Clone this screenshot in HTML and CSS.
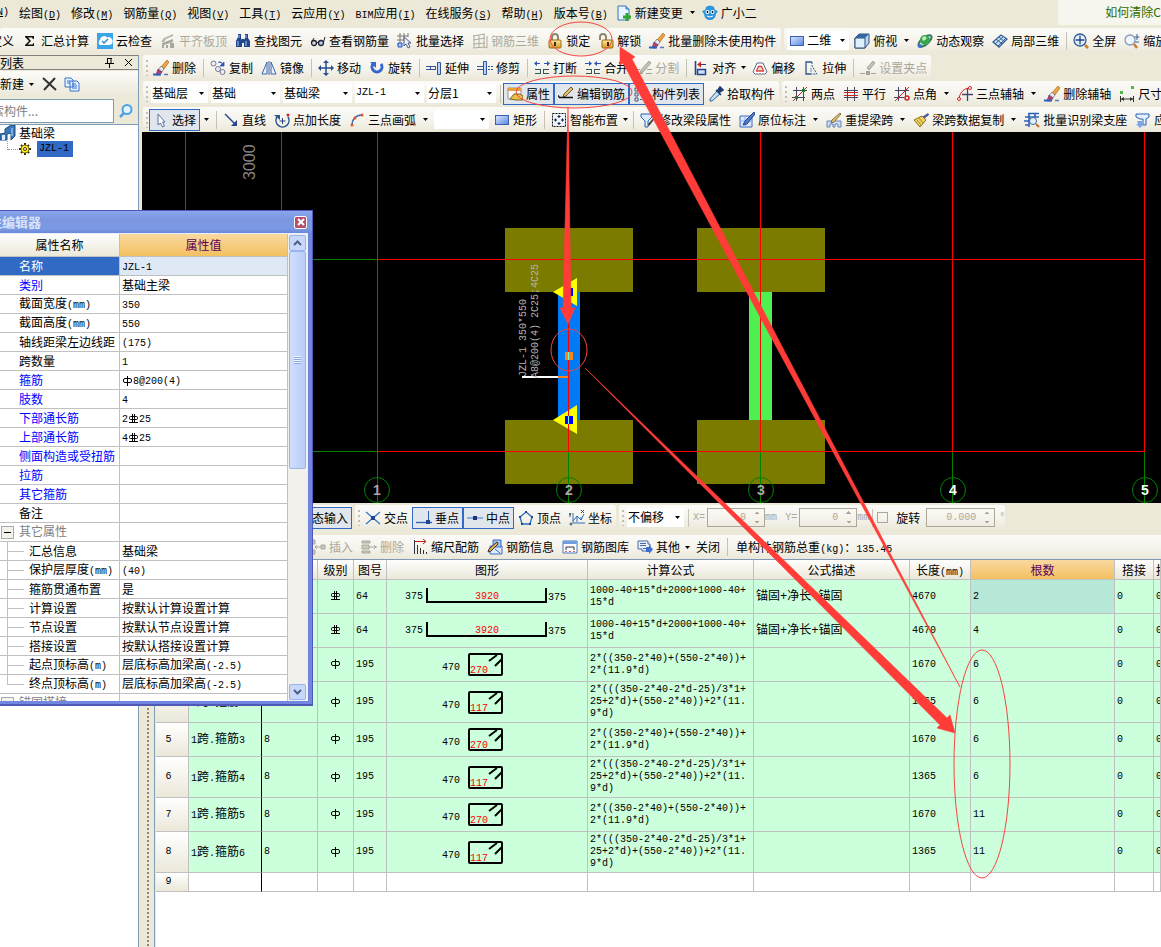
FILE: index.html
```html
<!DOCTYPE html>
<html lang="zh-CN">
<head>
<meta charset="utf-8">
<title>钢筋算量</title>
<link rel="stylesheet" href="styles.css">
</head>
<body>
<svg class="defs" aria-hidden="true">
<defs>
<linearGradient id="gb" x1="0" y1="0" x2="1" y2="1"><stop offset="0" stop-color="#dce9ff"/><stop offset="1" stop-color="#5a86e0"/></linearGradient>
<linearGradient id="gy" x1="0" y1="0" x2="0" y2="1"><stop offset="0" stop-color="#ffe9a0"/><stop offset="1" stop-color="#d99a2a"/></linearGradient>
</defs>
<symbol id="caret" viewBox="0 0 5 3"><path d="M0 0h5L2.500 3z" fill="#000"/></symbol>
<symbol id="sigma" viewBox="0 0 16 16"><path d="M3 3h9v3h-1L10 4.500H6L9 8l-3.500 3.500H10.500L11.500 10H12v3H3v-1l4-4-4-4z" fill="#111"/></symbol>
<symbol id="cloud" viewBox="0 0 16 16"><rect width="16" height="16" fill="#3aa5e8"/><path d="M3 12a3 3 0 0 1 0-5 4 4 0 0 1 7-2.500A3.500 3.500 0 0 1 13 12z" fill="#fff"/><path d="M5 8l2 2 4-4" fill="none" stroke="#2b8ac9" stroke-width="1.500"/></symbol>
<symbol id="slab" viewBox="0 0 16 16"><path d="M1 9l3-4 9-4v2L6 6l-2 3z" fill="#b9b6aa"/><path d="M2 10l11-4v3L4 12v3H2zM6 12h2v3H6zM10 10h4v5h-4z" fill="#aaa79b"/></symbol>
<symbol id="binoc" viewBox="0 0 16 16"><path d="M3 1h3v4l1 2v7H1V8l2-4zM10 1h3v4l2 3v6H9V7l1-2zM7 6h2v4H7z" fill="#22458c"/><path d="M3 8v5M11 8v5M4 2v3M11 2v3" stroke="#a9c4f5"/></symbol>
<symbol id="glasses" viewBox="0 0 16 16"><circle cx="4" cy="10" r="2.500" fill="#cfd9e8" stroke="#222" stroke-width="1.300"/><circle cx="11" cy="10" r="2.500" fill="#b8c9e4" stroke="#223" stroke-width="1.300"/><path d="M6.500 9.500h2M1.500 9L4 5M13.500 9L15 4" stroke="#223" fill="none"/></symbol>
<symbol id="batch" viewBox="0 0 16 16"><path d="M0 3h11M0 7h7M0 11h5M3 0v14M7 0v8M11 0v4" stroke="#777" fill="none"/><path d="M1 10h4v4H1z" fill="#9ec0ff" stroke="#2b59c0"/><path d="M7 4v9l2-2 2 4 2-1-2-4h3z" fill="#e9eefc" stroke="#4d5e86"/></symbol>
<symbol id="mesh" viewBox="0 0 16 16"><path d="M1 3l12-2M1 7l12-2M1 11l12-1M1 15l12-1M2 2v13M7 2v13M12 1v13M15 3v12M12 14l3 1" stroke="#aeab9f" fill="none"/></symbol>
<symbol id="lock" viewBox="0 0 16 16"><path d="M5 7V4a3 3 0 0 1 6 0v3" fill="none" stroke="#8d8670" stroke-width="2"/><rect x="2" y="7" width="12" height="8" rx="1" fill="url(#gy)" stroke="#9b6c14"/><path d="M8 9v4" stroke="#412c05" stroke-width="2"/></symbol>
<symbol id="unlock" viewBox="0 0 16 16"><path d="M2 7V4a3 3 0 0 1 6 0v3" fill="none" stroke="#8d8670" stroke-width="2"/><rect x="4" y="7" width="11" height="8" rx="1" fill="url(#gy)" stroke="#9b6c14"/><path d="M10 9v4" stroke="#412c05" stroke-width="2"/></symbol>
<symbol id="brush" viewBox="0 0 16 16"><path d="M14 0l2 2-5 7-3-2z" fill="#f0a23c" stroke="#9a5b1c" stroke-width=".6"/><path d="M8 6l3 3-2 3-4-2z" fill="#e5e8f0" stroke="#556" stroke-width=".6"/><path d="M5 9l4 3-2 3H3z" fill="#c23a6a" stroke="#43306a" stroke-width=".6"/><path d="M0 14.500h8" stroke="#2f5fc4" stroke-width="2"/><path d="M11 14.500h4" stroke="#5a78b8" stroke-width="1.500"/></symbol>
<symbol id="copy" viewBox="0 0 16 16"><circle cx="3.500" cy="3.500" r="2.500" fill="#eef" stroke="#778"/><circle cx="8" cy="9" r="2.500" fill="#eef" stroke="#778"/><circle cx="12.500" cy="12" r="2.500" fill="#eef" stroke="#778"/><path d="M8 2h3l2 2M14 2v4h-4z" stroke="#2a55bb" fill="#2a55bb" stroke-width=".8"/></symbol>
<symbol id="mirror" viewBox="0 0 16 16"><path d="M6 2v12H1zM10 2v12h5z" fill="#e8efff" stroke="#3a62a8"/><path d="M8 1v14" stroke="#3a62a8"/></symbol>
<symbol id="move" viewBox="0 0 16 16"><path d="M8 2v12M2 8h12" stroke="#2a4e8c" stroke-width="1.500"/><path d="M8 0l3 3H5zM8 16l3-3H5zM0 8l3-3v6zM16 8l-3-3v6z" fill="#2a4e8c"/></symbol>
<symbol id="rotate" viewBox="0 0 16 16"><path d="M4 4a5 5 0 1 0 8 0" fill="none" stroke="#3567cf" stroke-width="3"/><path d="M1 2h6v6z" fill="#3567cf"/></symbol>
<symbol id="extend" viewBox="0 0 16 16"><path d="M0 6.500h10M0 9.500h10M4.500 6.500v3M9.500 6.500v3" stroke="#31558f"/><path d="M11.500 2.500h3v12h-3z" fill="#b9d2ff" stroke="#31558f"/></symbol>
<symbol id="trim" viewBox="0 0 16 16"><path d="M0 6.500h6M0 9.500h6M11 6.500h2M11 9.500h2M14 6.500h2M14 9.500h2" stroke="#31558f"/><path d="M6.500 1.500h3v13h-3z" fill="#b9d2ff" stroke="#31558f"/></symbol>
<symbol id="brk" viewBox="0 0 16 16"><path d="M2 3.500h4M10 3.500h4" stroke="#2a55bb"/><path d="M0 3.500l3-2.500v5zM16 3.500l-3-2.500v5z" fill="#2a55bb"/><path d="M1 9.500h6M1 13.500h6M9 9.500h6M9 13.500h6M6.500 9v5M9.500 9v5" stroke="#355"/></symbol>
<symbol id="join" viewBox="0 0 16 16"><path d="M0 3.500h4M12 3.500h4" stroke="#2a55bb"/><path d="M7 3.500L4 1v5zM9 3.500L12 1v5z" fill="#2a55bb"/><path d="M1 9.500h6M9 9.500h6M1 13.500h6M9 13.500h6M6.500 9v5M9.500 9v5" stroke="#355"/></symbol>
<symbol id="split" viewBox="0 0 16 16"><path d="M13 1l2 2-8 9-3 1 1-3z" fill="#c4c1b5" stroke="#a5a296"/><path d="M0 13.500h7M10 13.500h6M0 9.500h4M11 9.500h5" stroke="#a5a296"/></symbol>
<symbol id="align" viewBox="0 0 16 16"><path d="M2.500 1v14" stroke="#26448a" stroke-width="1.600"/><path d="M5 4.500h8" stroke="#26448a"/><path d="M4 4.500l4-3v6z" fill="#c22"/><path d="M4.500 9.500h8v5h-8z" fill="#cfdcff" stroke="#26448a" stroke-width="1.500"/></symbol>
<symbol id="offset" viewBox="0 0 16 16"><path d="M1 12l4-9h6l4 9-2 2H3z" fill="#fff" stroke="#5b6a8a"/><path d="M4.500 11l2-4.500h3l2 4.500z" fill="#fbd9d5" stroke="#d34b3f" stroke-width="1.300"/></symbol>
<symbol id="stretch" viewBox="0 0 16 16"><path d="M9 2H3v12h5" fill="none" stroke="#2f568f" stroke-width="1.300"/><path d="M9 2v4l5 8H8" fill="none" stroke="#2f568f" stroke-dasharray="2 1"/><path d="M8 8v4" stroke="#6a8cd0"/></symbol>
<symbol id="grip" viewBox="0 0 16 16"><path d="M13 1l2 2-6 7-2-2z" fill="#c4c1b5" stroke="#a5a296"/><path d="M0 13.500h5M11 13.500h5" stroke="#a5a296"/><path d="M6 11h4v4H6z" fill="#a5a296"/></symbol>
<symbol id="prop" viewBox="0 0 16 16"><path d="M1 2h13v11H1z" fill="#fff" stroke="#8a8f9c"/><path d="M1 2h13v3H1z" fill="#e9a23b"/><path d="M3 13l4-5h6l3 2v4H9z" fill="#e8c04c" stroke="#80611a"/></symbol>
<symbol id="pencil" viewBox="0 0 16 16"><path d="M13 1l2 2-7 7-3 1 1-3z" fill="#e3c272" stroke="#6b5522"/><path d="M1 11.500h14M0 9.500l1.500 2" stroke="#111" stroke-width="1.300"/></symbol>
<symbol id="list" viewBox="0 0 16 16"><path d="M2 2h3v3H2zM2 7h3v3H2zM2 12h3v3H2z" fill="#eef" stroke="#456"/><path d="M7 3.500h8M7 8.500h8M7 13.500h8" stroke="#456" stroke-dasharray="2 1"/></symbol>
<symbol id="pick" viewBox="0 0 16 16"><path d="M9 5l3 3-8 7H2v-2z" fill="#bfe0f5" stroke="#35618f"/><path d="M8 4l5 5M10 4l2-3 3 3-3 2z" stroke="#1f3e70" fill="#1f3e70" stroke-width="1.600"/></symbol>
<symbol id="ax2" viewBox="0 0 16 16"><path d="M1 4.500h14M0 11.500h13M4.500 1v14M11.500 1v14" stroke="#446"/><path d="M1 15L15 1" stroke="#c22"/><path d="M3 10h3v3H3zM10 3h3v3h-3z" fill="#287a28"/></symbol>
<symbol id="axp" viewBox="0 0 16 16"><path d="M4.500 1v14M11.500 1v14" stroke="#446"/><path d="M1 4.500h14M1 11.500h14" stroke="#446"/><path d="M1 6.500h14M1 9.500h14" stroke="#c22"/></symbol>
<symbol id="axa" viewBox="0 0 16 16"><path d="M1 4.500h14M0 11.500h10M4.500 1v14M11.500 1v9" stroke="#446"/><path d="M1 15L15 1" stroke="#c22"/><circle cx="13" cy="12" r="2" fill="none" stroke="#c22" stroke-width="1.500"/></symbol>
<symbol id="ax3" viewBox="0 0 16 16"><path d="M5 8.500h11M10.500 2v13" stroke="#446" stroke-width="1.300"/><path d="M2 14C2 7 7 2 13 2" stroke="#d22" fill="none"/><circle cx="2" cy="13" r="1.500" fill="#fff" stroke="#d22"/><circle cx="13" cy="2" r="1.500" fill="#fff" stroke="#d22"/></symbol>
<symbol id="dim" viewBox="0 0 16 16"><path d="M1 5h3v3H1zM12 0h3v3h-3z" fill="#4cb84c"/><path d="M1.500 10v6M14.500 10v6M2 13h12" stroke="#333"/><path d="M2 13l3-2v4zM14 13l-3-2v4z" fill="#333"/></symbol>
<symbol id="cursor" viewBox="0 0 16 16"><path d="M5 2v11l2.500-2 2 4 2-1-2-4H12z" fill="#fff" stroke="#5a6f9e"/></symbol>
<symbol id="line" viewBox="0 0 16 16"><path d="M2 2l10 10" stroke="#26458c" stroke-width="1.400"/><path d="M14 14V8l-6 6z" fill="#26458c"/></symbol>
<symbol id="ptlen" viewBox="0 0 16 16"><path d="M3 5a6.500 6.500 0 1 0 11 0" fill="none" stroke="#2c5791" stroke-width="1.500"/><path d="M8.500 6v6M5.500 9h6" stroke="#24457f"/><path d="M0 3h6v5z" fill="#2c5791"/><circle cx="14" cy="3" r="1.500" fill="#c22"/></symbol>
<symbol id="arc" viewBox="0 0 16 16"><path d="M3 14C3 7 7 3 13 3" stroke="#3b68b4" fill="none" stroke-width="1.500"/><circle cx="3" cy="13" r="1.500" fill="#e0562c"/><circle cx="6" cy="6" r="1.500" fill="#e0562c"/><circle cx="13" cy="3" r="1.500" fill="#e0562c"/></symbol>
<symbol id="rect" viewBox="0 0 16 16"><rect x="1.500" y="3.500" width="13" height="9" fill="url(#gb)" stroke="#3a5fb5"/></symbol>
<symbol id="smart" viewBox="0 0 16 16"><rect x="1.500" y="1.500" width="13" height="13" fill="#eef4ff" stroke="#111" stroke-dasharray="2 1"/><path d="M8 3v3M8 10v3M3 8h3M10 8h3M6.500 4.500h3M6.500 11.500h3M4.500 6.500v3M11.500 6.500v3" stroke="#123"/></symbol>
<symbol id="filter" viewBox="0 0 16 16"><path d="M1 2h11v3L8 9v6H5V9L1 5z" fill="#d9ecff" stroke="#2b62b5"/><path d="M15 4l1 1-6 8-2 1 0-2z" fill="#444"/></symbol>
<symbol id="note" viewBox="0 0 16 16"><path d="M1 4h12v11H1z" fill="#dbe8ff" stroke="#3c6ac0"/><path d="M1 9h12M6 4v11" stroke="#8fb0ee"/><path d="M15 0l1 2-8 10-4 1 2-4z" fill="#4c7cc8" stroke="#24468a"/></symbol>
<symbol id="span" viewBox="0 0 16 16"><path d="M1 15V9h14v6h-3v-3h-3v3H7v-3H4v3z" fill="#cfe0fa" stroke="#6684b8"/><path d="M14 1l1 1-7 8-3 1 1-3z" fill="#e3c272" stroke="#8c6f3c"/></symbol>
<symbol id="sweep" viewBox="0 0 16 16"><path d="M15 1l1 2-5 4-2-2z" fill="#4a5a9c"/><path d="M9 4l4 4-6 7L1 8z" fill="#f0d263" stroke="#8c7218"/><path d="M4 8l4 5M6 6l4 5" stroke="#a98b28"/></symbol>
<symbol id="recog" viewBox="0 0 16 16"><path d="M4 1.500h11M1 5h14M0 9h5M5 1v14M11 1v4M1 13h4" stroke="#2f62b8" stroke-width="1.600"/><circle cx="9" cy="9" r="3.500" fill="#dff0ff" stroke="#45688f"/><path d="M12 12l3 3" stroke="#c3722a" stroke-width="2"/></symbol>
<symbol id="apply" viewBox="0 0 16 16"><path d="M1 2h13v3l-3 2v6H8V7H5L1 5z" fill="#e4efff" stroke="#2b62b5"/><path d="M2 9h5v3h2l-4 4-4-4h2z" fill="#7da6ea"/></symbol>
<symbol id="cube" viewBox="0 0 16 16"><path d="M1 5l4-4h10v9l-4 5H1z" fill="#bcd7f3" stroke="#2e517c"/><path d="M1 5h10v10H1z" fill="#e0effc" stroke="#2e517c"/><path d="M1 5l4-4h10l-4 4z" fill="#34699f"/></symbol>
<symbol id="orbit" viewBox="0 0 16 16"><ellipse cx="8" cy="8" rx="8" ry="3.500" transform="rotate(-40 8 8)" fill="none" stroke="#376" stroke-width="2"/><circle cx="8" cy="7" r="5" fill="#3aa54e"/><path d="M5 5q2-3 4-1t-3 4z" fill="#bdf0b4"/><circle cx="3" cy="13" r="2" fill="#4070cc"/></symbol>
<symbol id="local" viewBox="0 0 16 16"><path d="M1 9l8-7 6 4-8 8z" fill="#cfe2fa" stroke="#346196" stroke-width="1.300"/><path d="M4 6l6 5M7 4l6 5M3 11l8-7M6 13l8-8" stroke="#346196"/></symbol>
<symbol id="full" viewBox="0 0 16 16"><circle cx="7" cy="7" r="6" fill="#e7f2ff" stroke="#345d9c" stroke-width="1.300"/><path d="M7 2.500v9M2.500 7h9" stroke="#24457f" stroke-width="1.300"/><path d="M12 12l3 3" stroke="#c9802b" stroke-width="2.500"/></symbol>
<symbol id="zoomi" viewBox="0 0 16 16"><circle cx="6" cy="7" r="5" fill="#eef6ff" stroke="#8b9bb3" stroke-width="1.300"/><path d="M10 11l3 4" stroke="#c9802b" stroke-width="2.500"/><path d="M13 1v6M10.500 4h5M11 9h4" stroke="#3c5c99"/></symbol>
<symbol id="newdoc" viewBox="0 0 16 16"><path d="M2 1h8l3 3v11H2z" fill="#eaf4ff" stroke="#2f78b8"/><path d="M10 1v3h3" fill="#9fc7ea" stroke="#2f78b8"/><path d="M11 8v8M7 12h8" stroke="#32a532" stroke-width="3"/></symbol>
<symbol id="bot" viewBox="0 0 16 16"><path d="M4 2q4-3 8 0l1 3 3 1-2 3q-1 6-6 6t-6-6L0 6l3-1z" fill="#2d95de"/><circle cx="5.500" cy="7" r="2" fill="#fff"/><circle cx="10.500" cy="7" r="2" fill="#fff"/><circle cx="5.500" cy="7" r=".9"/><circle cx="10.500" cy="7" r=".9"/><path d="M5 11q3 2 6 0" stroke="#fff" fill="none"/></symbol>
<symbol id="cross" viewBox="0 0 16 16"><path d="M1 2l14 12M15 2L1 14" stroke="#3a78c8" stroke-width="1.300"/><path d="M6 6h4v4H6z" fill="#1f4690"/></symbol>
<symbol id="perp" viewBox="0 0 16 16"><path d="M0 12.500h16" stroke="#2c5fae" stroke-width="1.300"/><path d="M12.500 1v12" stroke="#2c5fae"/><path d="M10 10h4v4h-4z" fill="#1f4690"/></symbol>
<symbol id="mid" viewBox="0 0 16 16"><path d="M0 8h16" stroke="#5b94dd" stroke-width="1.300"/><path d="M6 6h4v4H6z" fill="#1f2e80"/></symbol>
<symbol id="vertex" viewBox="0 0 16 16"><path d="M8 2l6 5-2 7H4L2 7z" fill="none" stroke="#2c6fc0" stroke-width="1.300"/><path d="M7 1h2v2H7zM13 6h2v2h-2zM11 13h2v2h-2zM3 13h2v2H3zM1 6h2v2H1z" fill="#1f4690"/></symbol>
<symbol id="coord" viewBox="0 0 16 16"><path d="M4 3v10h12M4 11l4-5 4 4 3-6M8 6v6M12 10V7" stroke="#2c6fc0" fill="none"/><path d="M0 3l1 2 1-2M1 5v2M12 0l3 3M15 0l-3 3" stroke="#345" fill="none"/><circle cx="2" cy="14" r="1" fill="none" stroke="#345"/></symbol>
<symbol id="ins" viewBox="0 0 16 16"><path d="M1 1h4v4H1zM1 11h4v4H1zM11 6h4v4h-4z" fill="#ccc9bd" stroke="#aaa79b"/><path d="M5 8h6M5 8l2-2M5 8l2 2" stroke="#aaa79b"/></symbol>
<symbol id="del" viewBox="0 0 16 16"><path d="M1 2h8v2H1zM1 12h8v2H1zM1 6h7v4H1z" fill="#ccc9bd" stroke="#aaa79b"/><path d="M8 8h8M13 6l2 2-2 2" stroke="#aaa79b" fill="none"/></symbol>
<symbol id="scale" viewBox="0 0 16 16"><path d="M2.500 1v14M5.500 6v9M8.500 9v6M11.500 11v4M14.500 13v2" stroke="#334"/><path d="M3 2.500h11M11 0l3 2.500L11 5" stroke="#b22" fill="none"/></symbol>
<symbol id="info" viewBox="0 0 16 16"><path d="M3 7h12v8H3z" fill="#dce9ff" stroke="#3d6fc0"/><path d="M6 1h8v7H6z" fill="#9cc2f5" stroke="#3d6fc0"/><path d="M10 3l1 2-7 7-3 1 1-3z" fill="#f0b64c" stroke="#333"/><path d="M8 10l5 4" stroke="#3d6fc0"/></symbol>
<symbol id="lib" viewBox="0 0 16 16"><path d="M1 2h14v12H1z" fill="#fff" stroke="#4d79b8"/><path d="M1 2h14v3H1z" fill="#6ea0dd"/><path d="M4 11V8h8v3" fill="none" stroke="#333"/><path d="M3 12.500h10" stroke="#c66" stroke-dasharray="2 2"/></symbol>
<symbol id="other" viewBox="0 0 16 16"><path d="M1 2h10v3h2v7H5v-2H1z" fill="#e6f0ff" stroke="#46689c"/><path d="M3 4.500h6M3 6.500h6M6 9.500h3" stroke="#46689c"/><path d="M9 8h3V6l4 4.500-4 4.500v-2H9z" fill="#3c6fd0"/></symbol>
<symbol id="phi1" viewBox="0 0 11 11"><path d="M5.500 1v10" stroke="#000"/><rect x="1.500" y="3.500" width="8" height="4" rx="1.500" fill="none" stroke="#000"/></symbol>
<symbol id="phi2" viewBox="0 0 11 11"><path d="M4.500 1v9M6.500 1v9M1 9.500h9" stroke="#000"/><rect x="1.500" y="3.500" width="8" height="3" rx="1" fill="none" stroke="#000"/></symbol>
<symbol id="ushape" viewBox="0 0 200 33"><path d="M40 8v14h119V8" fill="none" stroke="#000" stroke-width="2"/></symbol>
<symbol id="hook" viewBox="0 0 200 33"><rect x="82" y="6" width="33" height="21" rx="1" fill="none" stroke="#000" stroke-width="2"/><path d="M102 13l8-6M108 18l7-7" stroke="#000" stroke-width="2"/></symbol>
</svg>

<nav class="menubar">
  <button class="menu cut">(<u>N</u>)</button>
  <button class="menu">绘图<span class="m">(<u>D</u>)</span></button>
  <button class="menu">修改<span class="m">(<u>M</u>)</span></button>
  <button class="menu">钢筋量<span class="m">(<u>Q</u>)</span></button>
  <button class="menu">视图<span class="m">(<u>V</u>)</span></button>
  <button class="menu">工具<span class="m">(<u>T</u>)</span></button>
  <button class="menu">云应用<span class="m">(<u>Y</u>)</span></button>
  <button class="menu"><span class="m">BIM</span>应用<span class="m">(<u>I</u>)</span></button>
  <button class="menu">在线服务<span class="m">(<u>S</u>)</span></button>
  <button class="menu">帮助<span class="m">(<u>H</u>)</span></button>
  <button class="menu">版本号<span class="m">(<u>B</u>)</span></button>
  <button class="btn"><svg class="ic"><use href="#newdoc"/></svg>新建变更<svg class="caret wide"><use href="#caret"/></svg></button>
  <button class="btn bot"><svg class="ic"><use href="#bot"/></svg>广小二</button>
  <div class="tip"><a href="#">如何清除C</a></div>
</nav>

<div class="row top">
  <div class="bar first">
    <button class="btn cutdef">定义</button>
    <button class="btn"><svg class="ic"><use href="#sigma"/></svg>汇总计算</button>
    <button class="btn"><svg class="ic"><use href="#cloud"/></svg>云检查</button>
    <button class="btn" disabled><svg class="ic"><use href="#slab"/></svg>平齐板顶</button>
    <button class="btn"><svg class="ic"><use href="#binoc"/></svg>查找图元</button>
    <button class="btn"><svg class="ic"><use href="#glasses"/></svg>查看钢筋量</button>
    <button class="btn"><svg class="ic"><use href="#batch"/></svg>批量选择</button>
    <button class="btn" disabled><svg class="ic"><use href="#mesh"/></svg>钢筋三维</button>
    <button class="btn"><svg class="ic"><use href="#lock"/></svg>锁定</button>
    <button class="btn"><svg class="ic"><use href="#unlock"/></svg>解锁</button>
    <button class="btn"><svg class="ic"><use href="#brush"/></svg>批量删除未使用构件</button>
  </div>
  <div class="bar fill view">
    <span class="combo w62"><svg class="ic"><use href="#rect"/></svg><select aria-label="视图维度"><option>二维</option></select><svg class="caret"><use href="#caret"/></svg></span>
    <button class="btn"><svg class="ic"><use href="#cube"/></svg>俯视<svg class="caret wide"><use href="#caret"/></svg></button>
    <button class="btn"><svg class="ic"><use href="#orbit"/></svg>动态观察</button>
    <button class="btn"><svg class="ic"><use href="#local"/></svg>局部三维</button>
    <i class="sep"></i>
    <button class="btn"><svg class="ic"><use href="#full"/></svg>全屏</button>
    <button class="btn"><svg class="ic"><use href="#zoomi"/></svg>缩放</button>
  </div>
</div>

<div class="body">
  <aside class="side">
    <header class="side-head"><span class="side-title">构件列表</span>
      <button class="tiny" aria-label="固定"><svg width="9" height="10"><path d="M2.500 0v5M6 0v5M2 .5h5M0 5.500h9M4.500 6v4" fill="none" stroke="#000"/></svg></button>
      <button class="tiny" aria-label="关闭"><svg width="9" height="9"><path d="M1 1l7 7M8 1L1 8" stroke="#000"/></svg></button>
    </header>
    <div class="side-bar">
      <button class="btn">新建<svg class="caret"><use href="#caret"/></svg></button>
      <button class="btn" aria-label="删除构件"><svg class="ic" viewBox="0 0 16 16"><path d="M1 2l13 12M13 2L2 14" stroke="#333" stroke-width="2"/></svg></button>
      <button class="btn" aria-label="复制构件"><svg class="ic" viewBox="0 0 16 16"><path d="M1 2h6l2 2v7H1zM6 5h7l2 2v8H6z" fill="#e5f0ff" stroke="#3b74c8"/><path d="M8 8h4M8 10h5M8 12h5M3 5h3M3 7h3" stroke="#3b74c8"/></svg></button>
    </div>
    <div class="search">
      <input type="text" placeholder="搜索构件..." aria-label="搜索构件">
      <button class="find" aria-label="搜索"><svg class="ic" viewBox="0 0 16 16"><circle cx="9" cy="6.500" r="4.500" fill="#e2f3ff" stroke="#4da3e2" stroke-width="2"/><path d="M6 10l-4 4" stroke="#4da3e2" stroke-width="2.500"/></svg></button>
    </div>
    <div class="tree">
      <div class="node"><svg class="ic" viewBox="0 0 16 16"><path d="M0 9l5-1V4l6-4h4v11l-4 4V8l-4 1v6H0z" fill="#3a78bb" stroke="#1e4a80"/><path d="M2 10h3v5H2z" fill="#d7ecff"/><path d="M12 3v8" stroke="#bfe0ff"/></svg>基础梁</div>
      <div class="node child"><svg class="ic" viewBox="0 0 16 16"><path d="M9 2v12M3 8h12M5 4l8 8M13 4l-8 8" stroke="#332d00" stroke-width="2"/><circle cx="9" cy="8" r="4" fill="#ffee22" stroke="#665b00" stroke-width=".8"/><circle cx="9" cy="8" r="1.500" fill="#fff" stroke="#443b00"/></svg><span class="m picked">JZL-1</span></div>
    </div>
  </aside>

  <main class="work">
    <div class="row">
      <div class="bar">
        <i class="grip"></i>
        <button class="btn"><svg class="ic"><use href="#brush"/></svg>删除</button><i class="sep"></i>
        <button class="btn"><svg class="ic"><use href="#copy"/></svg>复制</button>
        <button class="btn"><svg class="ic"><use href="#mirror"/></svg>镜像</button><i class="sep"></i>
        <button class="btn"><svg class="ic"><use href="#move"/></svg>移动</button>
        <button class="btn"><svg class="ic"><use href="#rotate"/></svg>旋转</button><i class="sep"></i>
        <button class="btn"><svg class="ic"><use href="#extend"/></svg>延伸</button>
        <button class="btn"><svg class="ic"><use href="#trim"/></svg>修剪</button><i class="sep"></i>
        <button class="btn"><svg class="ic"><use href="#brk"/></svg>打断</button>
        <button class="btn"><svg class="ic"><use href="#join"/></svg>合并</button>
        <button class="btn" disabled><svg class="ic"><use href="#split"/></svg>分割</button><i class="sep"></i>
        <button class="btn dd"><svg class="ic"><use href="#align"/></svg>对齐<svg class="caret"><use href="#caret"/></svg></button>
        <button class="btn"><svg class="ic"><use href="#offset"/></svg>偏移</button>
        <button class="btn"><svg class="ic"><use href="#stretch"/></svg>拉伸</button><i class="sep"></i>
        <button class="btn" disabled><svg class="ic"><use href="#grip"/></svg>设置夹点</button>
      </div>
    </div>
    <div class="row">
      <div class="bar">
        <i class="grip"></i>
        <span class="combo w57"><select aria-label="楼层"><option>基础层</option></select><svg class="caret"><use href="#caret"/></svg></span>
        <span class="combo w69"><select aria-label="构件类别"><option>基础</option></select><svg class="caret"><use href="#caret"/></svg></span>
        <span class="combo w69"><select aria-label="构件类型"><option>基础梁</option></select><svg class="caret"><use href="#caret"/></svg></span>
        <span class="combo w69"><select class="m" aria-label="构件"><option>JZL-1</option></select><svg class="caret"><use href="#caret"/></svg></span>
        <span class="combo w69"><select aria-label="分层"><option>分层1</option></select><svg class="caret"><use href="#caret"/></svg></span>
        <i class="sep"></i>
        <button class="btn on" aria-pressed="true"><svg class="ic"><use href="#prop"/></svg>属性</button>
        <button class="btn on" aria-pressed="true"><svg class="ic"><use href="#pencil"/></svg>编辑钢筋</button>
        <button class="btn on" aria-pressed="true"><svg class="ic"><use href="#list"/></svg>构件列表</button>
        <button class="btn"><svg class="ic"><use href="#pick"/></svg>拾取构件</button>
      </div>
      <div class="bar fill">
        <i class="grip"></i>
        <button class="btn"><svg class="ic"><use href="#ax2"/></svg>两点</button>
        <button class="btn"><svg class="ic"><use href="#axp"/></svg>平行</button>
        <button class="btn dd"><svg class="ic"><use href="#axa"/></svg>点角<svg class="caret wide"><use href="#caret"/></svg></button>
        <button class="btn dd"><svg class="ic"><use href="#ax3"/></svg>三点辅轴<svg class="caret wide"><use href="#caret"/></svg></button>
        <button class="btn"><svg class="ic"><use href="#brush"/></svg>删除辅轴</button>
        <button class="btn"><svg class="ic"><use href="#dim"/></svg>尺寸</button>
      </div>
    </div>
    <div class="row">
      <div class="bar fill">
        <i class="grip"></i>
        <button class="btn on" aria-pressed="true"><svg class="ic"><use href="#cursor"/></svg>选择</button>
        <button class="arrow" aria-label="选择方式"><svg class="caret wide"><use href="#caret"/></svg></button><i class="sep"></i>
        <button class="btn"><svg class="ic"><use href="#line"/></svg>直线</button>
        <button class="btn"><svg class="ic"><use href="#ptlen"/></svg>点加长度</button>
        <button class="btn dd"><svg class="ic"><use href="#arc"/></svg>三点画弧<svg class="caret wide"><use href="#caret"/></svg></button>
        <span class="combo w55"><select aria-label="半径"><option></option></select><svg class="caret"><use href="#caret"/></svg></span>
        <button class="btn"><svg class="ic"><use href="#rect"/></svg>矩形</button><i class="sep"></i>
        <button class="btn dd"><svg class="ic"><use href="#smart"/></svg>智能布置<svg class="caret"><use href="#caret"/></svg></button><i class="sep"></i>
        <button class="btn"><svg class="ic"><use href="#filter"/></svg>修改梁段属性</button>
        <button class="btn dd"><svg class="ic"><use href="#note"/></svg>原位标注<svg class="caret wide"><use href="#caret"/></svg></button>
        <button class="btn dd"><svg class="ic"><use href="#span"/></svg>重提梁跨<svg class="caret wide"><use href="#caret"/></svg></button>
        <button class="btn dd"><svg class="ic"><use href="#sweep"/></svg>梁跨数据复制<svg class="caret wide"><use href="#caret"/></svg></button>
        <button class="btn"><svg class="ic"><use href="#recog"/></svg>批量识别梁支座</button>
        <button class="btn"><svg class="ic"><use href="#apply"/></svg>应用</button>
      </div>
    </div>

    <svg class="canvas" role="img" aria-label="绘图区">
      <g transform="translate(-142 -132)">
        <g fill="#7b7b00"><path d="M505 228h128v64H505zM697 228h128v64H697zM505 420h128v64H505zM697 420h128v64H697z"/></g>
        <path d="M558 292h22v128h-22z" fill="#007bf7"/><path d="M749 292h23v128h-23z" fill="#50f050"/>
        <g stroke="#008200" fill="none"><path d="M185.500 132v90M281.500 132v90M281 259.500h96M281 451.500h96M377.500 451v51M568.500 451v51M760.500 451v51M952.500 451v51M1144.500 451v51"/>
        <circle cx="377" cy="490" r="12.500"/><circle cx="569" cy="490" r="12.500"/><circle cx="761" cy="490" r="12.500"/><circle cx="953" cy="490" r="12.500"/><circle cx="1145" cy="490" r="12.500"/></g>
        <path d="M553 292l24-14v28zM553 420l24-15v29z" fill="#ff0"/>
        <path d="M565 288h8v8h-8zM565 416h8v8h-8z" fill="#00f"/>
        <path d="M377 259.500h768M377 451.500h768M377.500 132v319M568.500 132v319M760.500 132v319M952.500 132v319M1144.500 132v319" stroke="#f00"/>
        <path d="M565 352h8v8h-8z" fill="#ff8214"/><path d="M568.500 352v8M568.500 416v8" stroke="#6fd"/>
        <path d="M522 377h36" stroke="#fff" stroke-width="2"/><path d="M558 377h10" stroke="#ff8214" stroke-width="2"/>
        <g class="cad"><text transform="translate(526 377) rotate(-90)">JZL-1 350*550</text><text transform="translate(538 378) rotate(-90)">A8@200(4) 2C25;4C25</text></g>
        <text class="span-dim" transform="translate(255 180) rotate(-90)">3000</text>
        <g class="axis"><text x="377" y="495">1</text><text x="569" y="495">2</text><text x="761" y="495">3</text><text class="lit" x="953" y="495">4</text><text class="lit" x="1145" y="495">5</text></g>
      </g>
    </svg>

    <div class="lower">
      <div class="splitter"></div>
      <section class="rebar">
        <div class="row snap">
          <div class="bar pad121">
            <button class="btn on" aria-pressed="true"><svg class="ic"><use href="#mid"/></svg>动态输入</button>
          </div>
          <div class="bar">
            <i class="grip"></i>
            <button class="btn"><svg class="ic"><use href="#cross"/></svg>交点</button>
            <button class="btn on" aria-pressed="true"><svg class="ic"><use href="#perp"/></svg>垂点</button>
            <button class="btn on" aria-pressed="true"><svg class="ic"><use href="#mid"/></svg>中点</button>
            <button class="btn"><svg class="ic"><use href="#vertex"/></svg>顶点</button>
            <button class="btn"><svg class="ic"><use href="#coord"/></svg>坐标</button>
          </div>
          <div class="bar">
            <i class="grip"></i>
            <span class="combo w57"><select aria-label="偏移方式"><option>不偏移</option></select><svg class="caret"><use href="#caret"/></svg></span><i class="sep"></i>
            <label class="num" for="ox">X=</label><span class="spin"><input id="ox" value="0" disabled><i></i></span><span class="unit">mm</span>
            <label class="num gap" for="oy">Y=</label><span class="spin"><input id="oy" value="0" disabled><i></i></span><span class="unit">mm</span><i class="sep"></i>
            <label class="check"><input type="checkbox">旋转</label>
            <span class="spin big"><input aria-label="旋转角度" value="0.000" disabled><i></i></span><span class="unit deg">°</span>
          </div>
        </div>
        <div class="bar edit pad150">
          <button class="btn" disabled><svg class="ic"><use href="#ins"/></svg>插入</button>
          <button class="btn" disabled><svg class="ic"><use href="#del"/></svg>删除</button>
          <button class="btn"><svg class="ic"><use href="#scale"/></svg>缩尺配筋</button>
          <button class="btn"><svg class="ic"><use href="#info"/></svg>钢筋信息</button>
          <button class="btn"><svg class="ic"><use href="#lib"/></svg>钢筋图库</button>
          <button class="btn dd"><svg class="ic"><use href="#other"/></svg>其他<svg class="caret"><use href="#caret"/></svg></button>
          <button class="btn">关闭</button><i class="sep"></i>
          <span class="total">单构件钢筋总重<span class="m">(kg)</span>：<span class="m">135.45</span></span>
        </div>
        <table class="grid">
          <colgroup><col class="c33"><col class="c73"><col class="c56"><col class="c36"><col class="c33"><col class="c201"><col class="c166"><col class="c156"><col class="c61"><col class="c144"><col class="c39"><col></colgroup>
          <thead><tr><th></th><th></th><th></th><th>级别</th><th>图号</th><th>图形</th><th>计算公式</th><th>公式描述</th><th>长度<span class="m">(mm)</span></th><th class="hot">根数</th><th>搭接</th><th class="edge">损耗</th></tr></thead>
          <tbody>
          <tr><th></th><td></td><td></td><td class="lv"><svg class="phi"><use href="#phi2"/></svg></td><td>64</td><td class="shape"><svg><use href="#ushape"/><text x="18" y="19">375</text><text class="r" x="88" y="19">3920</text><text x="161" y="20">375</text></svg></td><td>1000-40+15*d+2000+1000-40+<br>15*d</td><td class="cn">锚固+净长+锚固</td><td>4670</td><td class="cur">2</td><td>0</td><td>0</td></tr>
          <tr><th></th><td></td><td></td><td class="lv"><svg class="phi"><use href="#phi2"/></svg></td><td>64</td><td class="shape"><svg><use href="#ushape"/><text x="18" y="19">375</text><text class="r" x="88" y="19">3920</text><text x="161" y="20">375</text></svg></td><td>1000-40+15*d+2000+1000-40+<br>15*d</td><td class="cn">锚固+净长+锚固</td><td>4670</td><td>4</td><td>0</td><td>0</td></tr>
          <tr><th></th><td></td><td></td><td class="lv"><svg class="phi"><use href="#phi1"/></svg></td><td>195</td><td class="shape"><svg><use href="#hook"/><text x="55" y="22">470</text><text class="r" x="83" y="25">270</text></svg></td><td>2*((350-2*40)+(550-2*40))+<br>2*(11.9*d)</td><td></td><td>1670</td><td>6</td><td>0</td><td>0</td></tr>
          <tr><th></th><td>1<b>跨</b>.<b>箍筋</b>2</td><td></td><td class="lv"><svg class="phi"><use href="#phi1"/></svg></td><td>195</td><td class="shape"><svg><use href="#hook"/><text x="55" y="22">470</text><text class="r" x="83" y="25">117</text></svg></td><td>2*(((350-2*40-2*d-25)/3*1+<br>25+2*d)+(550-2*40))+2*(11.<br>9*d)</td><td></td><td>1365</td><td>6</td><td>0</td><td>0</td></tr>
          <tr><th>5</th><td>1<b>跨</b>.<b>箍筋</b>3</td><td>8</td><td class="lv"><svg class="phi"><use href="#phi1"/></svg></td><td>195</td><td class="shape"><svg><use href="#hook"/><text x="55" y="22">470</text><text class="r" x="83" y="25">270</text></svg></td><td>2*((350-2*40)+(550-2*40))+<br>2*(11.9*d)</td><td></td><td>1670</td><td>6</td><td>0</td><td>0</td></tr>
          <tr><th>6</th><td>1<b>跨</b>.<b>箍筋</b>4</td><td>8</td><td class="lv"><svg class="phi"><use href="#phi1"/></svg></td><td>195</td><td class="shape"><svg><use href="#hook"/><text x="55" y="22">470</text><text class="r" x="83" y="25">117</text></svg></td><td>2*(((350-2*40-2*d-25)/3*1+<br>25+2*d)+(550-2*40))+2*(11.<br>9*d)</td><td></td><td>1365</td><td>6</td><td>0</td><td>0</td></tr>
          <tr><th>7</th><td>1<b>跨</b>.<b>箍筋</b>5</td><td>8</td><td class="lv"><svg class="phi"><use href="#phi1"/></svg></td><td>195</td><td class="shape"><svg><use href="#hook"/><text x="55" y="22">470</text><text class="r" x="83" y="25">270</text></svg></td><td>2*((350-2*40)+(550-2*40))+<br>2*(11.9*d)</td><td></td><td>1670</td><td>11</td><td>0</td><td>0</td></tr>
          <tr><th>8</th><td>1<b>跨</b>.<b>箍筋</b>6</td><td>8</td><td class="lv"><svg class="phi"><use href="#phi1"/></svg></td><td>195</td><td class="shape"><svg><use href="#hook"/><text x="55" y="22">470</text><text class="r" x="83" y="25">117</text></svg></td><td>2*(((350-2*40-2*d-25)/3*1+<br>25+2*d)+(550-2*40))+2*(11.<br>9*d)</td><td></td><td>1365</td><td>11</td><td>0</td><td>0</td></tr>
          <tr class="blank"><th>9</th><td></td><td></td><td></td><td></td><td></td><td></td><td></td><td></td><td></td><td></td><td></td></tr>
          </tbody>
        </table>
      </section>
    </div>
  </main>
</div>

<section class="dialog" aria-label="属性编辑器">
  <header class="dlg-head"><span class="dlg-title">属性编辑器</span><button class="close" aria-label="关闭属性编辑器"><svg width="8" height="8"><path d="M1 1l6 6M7 1L1 7" stroke="#fff" stroke-width="2"/></svg></button></header>
  <div class="dlg-body">
    <div class="clip">
    <table class="props">
      <colgroup><col class="c120"><col></colgroup>
      <thead><tr><th>属性名称</th><th class="hot">属性值</th></tr></thead>
      <tbody>
      <tr class="sel"><td>名称</td><td><span class="m">JZL-1</span></td></tr>
      <tr class="blue"><td>类别</td><td>基础主梁</td></tr>
      <tr><td>截面宽度<span class="m">(mm)</span></td><td><span class="m">350</span></td></tr>
      <tr><td>截面高度<span class="m">(mm)</span></td><td><span class="m">550</span></td></tr>
      <tr><td>轴线距梁左边线距</td><td><span class="m">(175)</span></td></tr>
      <tr><td>跨数量</td><td><span class="m">1</span></td></tr>
      <tr class="blue"><td>箍筋</td><td><svg class="phi"><use href="#phi1"/></svg><span class="m">8@200(4)</span></td></tr>
      <tr class="blue"><td>肢数</td><td><span class="m">4</span></td></tr>
      <tr class="blue"><td>下部通长筋</td><td><span class="m">2</span><svg class="phi"><use href="#phi2"/></svg><span class="m">25</span></td></tr>
      <tr class="blue"><td>上部通长筋</td><td><span class="m">4</span><svg class="phi"><use href="#phi2"/></svg><span class="m">25</span></td></tr>
      <tr class="blue"><td>侧面构造或受扭筋</td><td></td></tr>
      <tr class="blue"><td>拉筋</td><td></td></tr>
      <tr class="blue"><td>其它箍筋</td><td></td></tr>
      <tr><td>备注</td><td></td></tr>
      <tr class="group"><td><button class="fold" aria-label="折叠其它属性"></button>其它属性</td><td></td></tr>
      <tr class="sub"><td>汇总信息</td><td>基础梁</td></tr>
      <tr class="sub"><td>保护层厚度<span class="m">(mm)</span></td><td><span class="m">(40)</span></td></tr>
      <tr class="sub"><td>箍筋贯通布置</td><td>是</td></tr>
      <tr class="sub"><td>计算设置</td><td>按默认计算设置计算</td></tr>
      <tr class="sub"><td>节点设置</td><td>按默认节点设置计算</td></tr>
      <tr class="sub"><td>搭接设置</td><td>按默认搭接设置计算</td></tr>
      <tr class="sub"><td>起点顶标高<span class="m">(m)</span></td><td>层底标高加梁高<span class="m">(-2.5)</span></td></tr>
      <tr class="sub last"><td>终点顶标高<span class="m">(m)</span></td><td>层底标高加梁高<span class="m">(-2.5)</span></td></tr>
      <tr class="group"><td><button class="fold" aria-label="折叠锚固搭接"></button>锚固搭接</td><td></td></tr>
      </tbody>
    </table>
    </div>
    <div class="scroll">
      <button aria-label="向上滚动"><svg width="9" height="6"><path d="M1 5l3.500-3.500L8 5" fill="none" stroke="#4d6185" stroke-width="2"/></svg></button>
      <div class="thumb"><i></i></div>
      <button aria-label="向下滚动"><svg width="9" height="6"><path d="M1 1l3.500 3.500L8 1" fill="none" stroke="#4d6185" stroke-width="2"/></svg></button>
    </div>
  </div>
</section>

<svg class="marks" aria-hidden="true">
  <g fill="none" stroke="#f54440"><ellipse cx="581" cy="39" rx="31" ry="17"/><ellipse cx="574" cy="92" rx="58" ry="16"/><ellipse cx="569" cy="350" rx="18" ry="21"/><ellipse cx="982" cy="764" rx="28" ry="114"/></g>
  <g fill="#ff3c38" stroke="#ff3c38" stroke-width=".6"><path d="M568 107L571 308h4l-7 16-8-16h3z"/><path d="M585 368L947 718l3-3 5 18-18-5 3-3z"/><path d="M960 687L623 63l-3 2 0-18 15 10-3 2z"/></g>
</svg>
</body>
</html>
```

FILE: styles.css
```css
* { box-sizing: border-box; }
html, body { height: 100%; }
body {
  margin: 0;
  display: flex;
  flex-direction: column;
  overflow: hidden;
  position: relative;
  background: #ece9d8;
  color: #000;
  font: 12px/16px "Noto Sans CJK SC", sans-serif;
  white-space: nowrap;
}
button, input, select { font: inherit; color: inherit; }
button { border: 0; background: none; padding: 0; }
.defs { position: absolute; width: 0; height: 0; }
.m { font-family: "Liberation Mono", "Noto Sans CJK SC", monospace; font-size: 10px; line-height: 10px; }
.ic { width: 16px; height: 16px; flex: none; }
.caret { width: 9px; height: 3px; flex: none; }
.caret.wide { width: 13px; }

/* menu and toolbars */
.menubar { display: flex; align-items: center; height: 25px; flex: none; overflow: hidden; }
.menu { padding: 0 5px; flex: none; }
.menu.cut { margin-left: -14px; font: 10px/16px "Liberation Mono", monospace; }
.menubar .btn { padding: 0 3px; }
.menubar .bot { padding-left: 0; }
.tip { margin-left: auto; align-self: stretch; flex: 0 0 100px; padding: 4px 0 0 47px; background: #f6f5ee; }
.tip a { color: #2f6b00; text-decoration: none; }
.row { display: flex; gap: 3px; flex: none; overflow: hidden; }
.row.top { margin: 3px 0 2px; }
.bar {
  display: flex;
  align-items: center;
  flex: none;
  height: 25px;
  border-radius: 3px;
  background: linear-gradient(#fcfbf8, #f4f2ea 60%, #ebe8d9);
}
.bar.first { padding-right: 1px; }
.bar.fill { flex: 1 0 auto; }
.btn { display: flex; align-items: center; gap: 3px; height: 22px; padding: 0 4px; flex: none; }
.btn.dd { padding-right: 0; }
.bar .btn:has(.wide) { padding-right: 0; }
.btn:disabled { color: #aca899; }
.btn.on { border: 1px solid #316ac5; background: #e1e6ed; padding: 0 3px; }
.btn.cutdef { margin-left: -14px; }
.view { padding-left: 1px; }
.sep { width: 1px; height: 18px; margin: 0 2px 0 3px; background: #c5c2b4; flex: none; }
.grip { width: 2px; height: 16px; margin: 0 1px 0 3px; flex: none; background: repeating-linear-gradient(#c1beb0 0 2px, transparent 2px 5px); }
.arrow { display: flex; }
.combo { display: flex; align-items: center; flex: none; height: 19px; margin: 0 1px 0 2px; background: #fff; }
.combo select { flex: 1; min-width: 0; height: 18px; border: 0; padding: 0 0 2px 1px; background: transparent; appearance: none; outline: 0; }
.combo .caret { margin: 0 2px 0 -10px; pointer-events: none; }
.combo .ic { margin: 0 1px 0 2px; }
.w55 { width: 55px; }
.w57 { width: 57px; }
.w62 { width: 62px; }
.w69 { width: 69px; }

/* component list */
.body { display: flex; flex: 1; min-height: 0; }
.side { width: 139px; flex: none; display: flex; flex-direction: column; border-right: 1px solid #7f9db9; overflow: hidden; }
.side-head { display: flex; align-items: center; gap: 10px; height: 15px; line-height: 13px; flex: none; padding-right: 5px; border: solid #808080; border-width: 1px 0; }
.side-title { flex: 1; margin-left: -24px; }
.tiny { display: flex; }
.side-bar { display: flex; align-items: center; height: 26px; flex: none; margin: 1px 0; background: linear-gradient(#fcfbf8, #ebe8d9); }
.side-bar .btn { padding: 0 3px; }
.side-bar .btn:first-child { margin-left: -3px; }
.search { display: flex; align-items: center; height: 25px; flex: none; margin-bottom: 1px; }
.search input { width: 138px; height: 24px; margin-left: -24px; border: 1px solid #7f9db9; padding: 0 3px; background: #fff; border-radius: 0; outline: 0; }
.search input::placeholder { color: #808080; }
.find { display: flex; margin-left: 4px; }
.tree { flex: 1; background: #fff; border-top: 1px solid #7f9db9; }
.node { display: flex; align-items: center; gap: 3px; height: 16px; }
.node.child { margin-left: 7px; padding-left: 9px; gap: 5px; background: radial-gradient(#999 50%, transparent 0) 0 8px / 2px 1px no-repeat, repeating-linear-gradient(90deg, #999 0 1px, transparent 1px 2px) 0 8px / 11px 1px no-repeat, repeating-linear-gradient(#999 0 1px, transparent 1px 2px) 0 0 / 1px 8px no-repeat; }
.picked { padding: 3px 4px 3px 2px; background: #316ac5; }

/* drawing area */
.work { flex: 1; min-width: 0; display: flex; flex-direction: column; }
.work > .row { margin: 0 0 1px 4px; }
.work > .row:nth-child(3) { margin-bottom: 0; }
.canvas { display: block; flex: none; align-self: stretch; height: 371px; margin-left: 3px; background: #000; }
.cad { fill: #b4b4b4; font: 10px "Liberation Mono", monospace; }
.span-dim { fill: #858585; font: 16px "Liberation Sans", sans-serif; }
.axis { fill: #b0a0b0; font: bold 14px "Liberation Sans", sans-serif; text-anchor: middle; }
.lit { fill: #fff; }

/* rebar editor */
.lower { display: flex; flex: 1; min-height: 0; }
.splitter { width: 16px; flex: none; margin-right: 1px; border-right: 1px solid #7f9db9; background: radial-gradient(circle, #8a8778 1px, transparent 1px) 7px 0 / 4px 4px repeat-y; }
.rebar { flex: 1; min-width: 0; background: #fff; overflow: hidden; }
.snap { padding: 2px 0 5px; background: #ece9d8; }
.pad121 { padding-left: 121px; }
.pad150 { padding-left: 150px; }
.edit { border-bottom: 1px solid #8197b8; border-radius: 0; overflow: hidden; }
.total { margin-left: 6px; }
.num, .unit { color: #aca899; font: 10px/16px "Liberation Mono", monospace; }
.num { margin: 0 2px; }
.num.gap { margin-left: 8px; }
.deg { margin-left: 4px; }
.spin { display: flex; align-items: center; width: 58px; height: 19px; border: 1px solid #aca899; }
.spin.big { width: 69px; margin-left: 6px; }
.spin input { flex: 1; min-width: 0; width: 20px; height: 15px; border: 0; padding: 0; background: none; color: #aca899; text-align: right; font: 10px "Liberation Mono", monospace; }
.spin i { width: 18px; height: 13px; background:
  conic-gradient(from 135deg at 50% 0, #aca899 0 90deg, transparent 0) 8px 0 / 6px 3px no-repeat,
  conic-gradient(from -45deg at 50% 100%, #aca899 0 90deg, transparent 0) 8px 10px / 6px 3px no-repeat; }
.check { display: flex; align-items: center; gap: 8px; margin-left: 2px; }
.check input { appearance: none; width: 11px; height: 11px; margin: 0; border: 1px solid #aca899; }

table { border-collapse: separate; border-spacing: 0; table-layout: fixed; width: 100%; }
th, td { padding: 0; font-weight: normal; text-align: left; border: solid #c0c0c0; border-width: 0 1px 1px 0; overflow: hidden; }
.grid thead th { height: 20px; text-align: center; background: linear-gradient(#fefefd, #ebe8d9); }
.grid thead .edge { text-align: left; padding-left: 2px; }
.grid thead .hot, .props thead .hot { background: linear-gradient(#fad9a0, #f2c060); color: #5a005a; }
.grid tbody { font: 10px/12px "Liberation Mono", "Noto Sans CJK SC", monospace; }
.grid tbody td { height: 34px; padding: 2px 0 2px 2px; background: #ccffdb; }
.grid tbody th { padding-right: 7px; text-align: center; background: linear-gradient(#fff, #ebe8d9); }
.grid td b { font: 12px/12px "Noto Sans CJK SC", sans-serif; }
.grid td.cn { font: 12px/12px "Liberation Mono", "Noto Sans CJK SC", monospace; }
.grid td:nth-child(2) { border-right-color: #000; }
.grid tbody td.lv { text-align: center; padding: 0; }
.grid tbody td.cur { background: #b5e8d7; }
.grid tbody td.shape { padding: 0; }
.shape svg { display: block; width: 200px; height: 33px; }
.shape .r { fill: #f00; }
.grid tbody .blank td { height: 19px; background: #fff; }
.phi { width: 11px; height: 11px; vertical-align: middle; }
.c33 { width: 33px; }
.c36 { width: 36px; }
.c39 { width: 39px; }
.c56 { width: 56px; }
.c61 { width: 61px; }
.c73 { width: 73px; }
.c120 { width: 120px; }
.c144 { width: 144px; }
.c156 { width: 156px; }
.c166 { width: 166px; }
.c201 { width: 201px; }

/* floating property editor */
.dialog { position: absolute; left: 0; top: 210px; width: 313px; height: 496px; display: flex; flex-direction: column; overflow: hidden; border: solid #5058b8; border-width: 1px 1px 2px 0; background: #7186e0; }
.dlg-head { display: flex; align-items: center; justify-content: space-between; height: 22px; flex: none; padding-right: 5px; background: linear-gradient(#8aa5ea, #7a96df 40%, #7b9ae4 80%, #6c88d8); }
.dlg-title { margin-left: -24px; color: #d8e4f8; font-size: 13px; font-weight: bold; }
.close { display: flex; align-items: center; justify-content: center; width: 13px; height: 13px; border: 1px solid #fff; border-radius: 2px; background: #b4506c; }
.dlg-body { display: flex; flex: 1; min-height: 0; margin: 0 4px 3px 0; background: #fff; border: solid #e8eefc; border-width: 1px 1px 0 0; }
.clip { flex: 1; min-width: 0; overflow: hidden; }
.props th { height: 23px; text-align: center; background: linear-gradient(#fefefd, #ebe8d9); }
.props td { height: 19px; line-height: 14px; padding: 0 0 1px 2px; }
.props td:first-child { padding-left: 19px; }
.props .blue td:first-child { color: #00f; }
.props .sel td { background: #dfe9f5; }
.props .sel td:first-child { background: #316ac5; color: #fff; }
.props .group td:first-child { color: #808080; padding-left: 1px; }
.fold { width: 13px; height: 13px; margin-right: 5px; vertical-align: middle; border: 1px solid #aaa; background: linear-gradient(#000, #000) center / 7px 1px no-repeat #f4f2ea; }
.props .sub td:first-child { padding-left: 29px; background: linear-gradient(#c0c0c0, #c0c0c0) 7px 0 / 1px 100% no-repeat, linear-gradient(#c0c0c0, #c0c0c0) 7px 9px / 17px 1px no-repeat; }
.props .sub.last td:first-child { background-size: 1px 10px, 17px 1px; }
.scroll { width: 19px; display: flex; flex-direction: column; justify-content: space-between; padding: 1px; background: #f3f1ec; }
.scroll button { display: flex; align-items: center; justify-content: center; height: 16px; border: 1px solid #98b4ea; border-radius: 2px; background: #c8d8fb; }
.thumb { display: flex; align-items: center; justify-content: center; height: 218px; margin-bottom: auto; border: 1px solid #98b4ea; border-radius: 2px; background: linear-gradient(90deg, #cfdefd, #b9cdf8); }
.thumb i { width: 7px; height: 8px; background: repeating-linear-gradient(#eef4fe 0 1px, #8ca8e0 1px 2px); }

/* review marks drawn over the whole window */
.marks { position: absolute; inset: 0; width: 100%; height: 100%; pointer-events: none; }
```
